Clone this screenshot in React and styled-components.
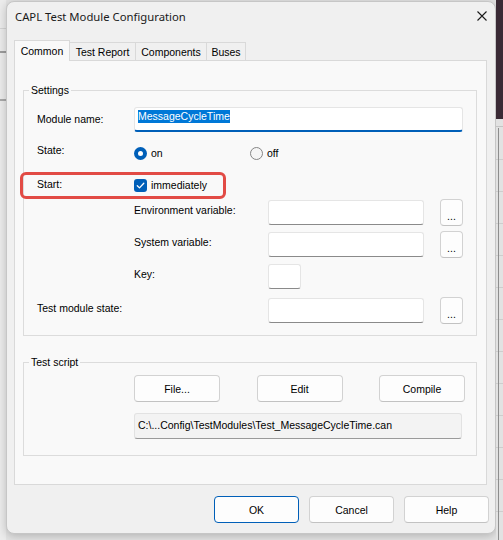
import React from 'react'
import styled, { createGlobalStyle } from 'styled-components'

const UI_FONT = `'Liberation Sans', Arial, sans-serif`

const GlobalStyle = createGlobalStyle`
  html, body {
    margin: 0;
    padding: 0;
  }
  body {
    background: #e4e4e4;
  }
  * {
    box-sizing: border-box;
  }
`

const Page = styled.div`
  display: flex;
  width: 503px;
  height: 540px;
  overflow: hidden;
  background: #e4e4e4;
  font-family: ${UI_FONT};
  font-size: 10.5px;
  color: #000;
`

const LeftBackdrop = styled.div`
  flex: 0 0 6px;
  background:
    linear-gradient(#d4d4d4, #d4d4d4) 0 28px / 100% 1px no-repeat,
    linear-gradient(#9c9c9c, #9c9c9c) 0 51px / 100% 2px no-repeat,
    linear-gradient(#a9a9a9, #a9a9a9) 0 99px / 100% 2px no-repeat,
    #ececec;
`

const RightBackdrop = styled.div`
  flex: 0 0 7px;
  background:
    linear-gradient(#3a2a35, #3a2a35) 0 0 / 100% 119px no-repeat,
    linear-gradient(#c4c4c4, #c4c4c4) 0 126px / 100% 1px no-repeat,
    linear-gradient(#8d8d8d, #8d8d8d) 2px 128px / 1px 100% no-repeat,
    repeating-linear-gradient(to bottom, #e2e2e2 0 31px, #cdcdcd 31px 32px) 0 128px / 100% 100% no-repeat,
    #e2e2e2;
`

const DialogColumn = styled.div`
  flex: 0 0 490px;
  padding-top: 1px;
`

const Dialog = styled.div`
  display: flex;
  flex-direction: column;
  height: 533px;
  background: #f0f0f0;
  border: 1px solid #c6c6c6;
  border-radius: 8px;
  box-shadow: 0 2px 10px rgba(0, 0, 0, 0.22);
`

const TitleBar = styled.div`
  display: flex;
  align-items: center;
  justify-content: space-between;
  height: 28px;
  padding: 0 8px 0 8px;
`

const Title = styled.span`
  font-family: 'Noto Sans', 'Open Sans', sans-serif;
  font-size: 11.3px;
  color: #1a1a1a;
`

const Body = styled.div`
  display: flex;
  flex-direction: column;
  padding: 10px 8px 0 7px;
`

const TabStrip = styled.div`
  display: flex;
  align-items: flex-end;
  height: 20px;
`

const Tab = styled.div`
  display: flex;
  align-items: center;
  justify-content: center;
  width: ${({ $w }) => $w}px;
  height: ${({ $active }) => ($active ? 21 : 18)}px;
  margin-bottom: ${({ $active }) => ($active ? -1 : 0)}px;
  margin-left: ${({ $first }) => ($first ? 0 : -1)}px;
  position: relative;
  z-index: ${({ $active }) => ($active ? 2 : 1)};
  background: ${({ $active }) => ($active ? '#f9f9f9' : '#f0f0f0')};
  border: 1px solid #d9d9d9;
  border-bottom: none;
  font-size: 10.5px;
`

const Panel = styled.div`
  height: 425px;
  background: #f9f9f9;
  border: 1px solid #d9d9d9;
  padding: 23px 9px 0 8px;
`

const GroupBox = styled.fieldset`
  margin: ${({ $mt }) => $mt || 0}px 0 0 0;
  padding: 0;
  border: 1px solid #dcdcdc;
  min-width: 0;
`

const Legend = styled.legend`
  margin-left: 5px;
  padding: 0 2px;
  line-height: 12px;
  font-size: 10.5px;
`

const GroupBody = styled.div`
  padding: ${({ $pad }) => $pad};
`

const Row = styled.div`
  display: grid;
  grid-template-columns: 97px 134px 156px 16px 23px;
  align-items: center;
  height: ${({ $h }) => $h}px;
  margin-top: ${({ $mt }) => $mt || 0}px;
  position: relative;
`

const Label = styled.span`
  grid-column: ${({ $col }) => $col || 1};
  padding-bottom: ${({ $lift }) => ($lift === undefined ? 4 : $lift)}px;
  line-height: 13px;
  white-space: nowrap;
`

const TextBox = styled.div`
  display: flex;
  align-items: flex-start;
  grid-column: ${({ $col }) => $col || 3};
  width: ${({ $w }) => ($w ? `${$w}px` : 'auto')};
  height: 25px;
  padding: ${({ $focused }) => ($focused ? '2px 3px' : '5px 3px')};
  background: #fff;
  border: 1px solid #e5e5e5;
  border-bottom: ${({ $focused }) => ($focused ? '2px solid #005fb8' : '1px solid #8a8a8a')};
  border-radius: 3px;
  line-height: 13px;
`

const Selected = styled.span`
  background: #0078d7;
  color: #fff;
  line-height: 13px;
`

const BrowseButton = styled.button`
  grid-column: 5;
  width: 23px;
  height: 27px;
  padding: 0 0 3px 0;
  display: flex;
  align-items: flex-end;
  justify-content: center;
  background: #fdfdfd;
  border: 1px solid #d2d2d2;
  border-bottom-color: #c2c2c2;
  border-radius: 4px;
  font-family: ${UI_FONT};
  font-size: 10.5px;
  color: #000;
`

const ChoiceGroup = styled.div`
  grid-column: 2 / -1;
  display: flex;
  align-items: center;
`

const Choice = styled.label`
  display: flex;
  align-items: center;
  gap: 4px;
  width: ${({ $w }) => ($w ? `${$w}px` : 'auto')};
  line-height: 13px;
`

const RadioDot = styled.span`
  flex: 0 0 13px;
  height: 13px;
  border-radius: 50%;
  display: flex;
  align-items: center;
  justify-content: center;
  background: ${({ $on }) => ($on ? '#005fb8' : '#f5f5f5')};
  border: ${({ $on }) => ($on ? 'none' : '1px solid #858585')};

  &::after {
    content: '';
    display: ${({ $on }) => ($on ? 'block' : 'none')};
    width: 5px;
    height: 5px;
    border-radius: 50%;
    background: #fff;
  }
`

const CheckBox = styled.span`
  flex: 0 0 13px;
  height: 13px;
  border-radius: 3px;
  background: #005fb8;
  display: flex;
  align-items: center;
  justify-content: center;
`

const Highlight = styled.div`
  position: absolute;
  left: -17px;
  top: -1px;
  width: 206px;
  height: 27px;
  border: 3px solid #e24b45;
  border-radius: 6px;
  pointer-events: none;
`

const ButtonRow = styled.div`
  display: flex;
  justify-content: ${({ $end }) => ($end ? 'flex-end' : 'space-between')};
  gap: ${({ $gap }) => $gap || 0}px;
`

const PushButton = styled.button`
  width: ${({ $w }) => $w}px;
  height: 27px;
  padding: 0;
  background: #fdfdfd;
  border: 1px solid ${({ $default }) => ($default ? '#005fb8' : '#d2d2d2')};
  border-bottom-color: ${({ $default }) => ($default ? '#005fb8' : '#c2c2c2')};
  border-radius: 4px;
  font-family: ${UI_FONT};
  font-size: 10.5px;
  color: #000;
`

const PathBox = styled.div`
  width: 328px;
  height: 26px;
  margin-top: 11px;
  padding: 5px 3px;
  background: #f3f3f3;
  border: 1px solid #e2e2e2;
  border-bottom-color: #9a9a9a;
  border-radius: 3px;
  line-height: 13px;
  white-space: nowrap;
`

const Footer = styled(ButtonRow)`
  margin: 11px -2px 0 0;
`

const CloseIcon = () => (
  <svg width="10" height="10" viewBox="0 0 10 10">
    <path d="M0.5 0.5 L9.5 9.5 M9.5 0.5 L0.5 9.5" stroke="#1a1a1a" strokeWidth="1.1" fill="none" />
  </svg>
)

const CheckMark = () => (
  <svg width="9" height="9" viewBox="0 0 9 9">
    <path d="M1.3 4.8 L3.5 6.9 L7.8 2.2" stroke="#fff" strokeWidth="1.3" fill="none" strokeLinecap="round" strokeLinejoin="round" />
  </svg>
)

const tabs = [
  { name: 'Common', w: 56 },
  { name: 'Test Report', w: 67 },
  { name: 'Components', w: 72 },
  { name: 'Buses', w: 40 },
]

const variableRows = [
  { label: 'Environment variable:', mt: 1 },
  { label: 'System variable:', mt: 5 },
]

const App = () => {
  return (
    <>
      <GlobalStyle />
      <Page>
        <LeftBackdrop />
        <DialogColumn>
          <Dialog>
            <TitleBar>
              <Title>CAPL Test Module Configuration</Title>
              <CloseIcon />
            </TitleBar>
            <Body>
              <TabStrip>
                {tabs.map((tab, i) => (
                  <Tab key={tab.name} $w={tab.w} $active={i === 0} $first={i === 0}>
                    {tab.name}
                  </Tab>
                ))}
              </TabStrip>
              <Panel>
                <GroupBox>
                  <Legend>Settings</Legend>
                  <GroupBody $pad="11px 13px 11px 13px">
                    <Row $h={25}>
                      <Label $lift={1}>Module name:</Label>
                      <TextBox $col="2 / -1" $focused>
                        <Selected>MessageCycleTime</Selected>
                      </TextBox>
                    </Row>
                    <Row $h={25} $mt={9}>
                      <Label $lift={7}>State:</Label>
                      <ChoiceGroup>
                        <Choice $w={116}>
                          <RadioDot $on />
                          on
                        </Choice>
                        <Choice>
                          <RadioDot />
                          off
                        </Choice>
                      </ChoiceGroup>
                    </Row>
                    <Row $h={25} $mt={7}>
                      <Highlight />
                      <Label $lift={3}>Start:</Label>
                      <ChoiceGroup>
                        <Choice>
                          <CheckBox>
                            <CheckMark />
                          </CheckBox>
                          immediately
                        </Choice>
                      </ChoiceGroup>
                    </Row>
                    {variableRows.map((row) => (
                      <Row key={row.label} $h={27} $mt={row.mt}>
                        <Label $col={2}>{row.label}</Label>
                        <TextBox />
                        <BrowseButton>...</BrowseButton>
                      </Row>
                    ))}
                    <Row $h={27} $mt={5}>
                      <Label $col={2}>Key:</Label>
                      <TextBox $w={33} />
                    </Row>
                    <Row $h={27} $mt={7}>
                      <Label>Test module state:</Label>
                      <TextBox />
                      <BrowseButton>...</BrowseButton>
                    </Row>
                  </GroupBody>
                </GroupBox>
                <GroupBox $mt={20}>
                  <Legend>Test script</Legend>
                  <GroupBody $pad="7px 11px 16px 110px">
                    <ButtonRow>
                      <PushButton $w={86}>File...</PushButton>
                      <PushButton $w={86}>Edit</PushButton>
                      <PushButton $w={86}>Compile</PushButton>
                    </ButtonRow>
                    <PathBox>C:\...Config\TestModules\Test_MessageCycleTime.can</PathBox>
                  </GroupBody>
                </GroupBox>
              </Panel>
              <Footer $end $gap={10}>
                <PushButton $w={85} $default>OK</PushButton>
                <PushButton $w={85}>Cancel</PushButton>
                <PushButton $w={85}>Help</PushButton>
              </Footer>
            </Body>
          </Dialog>
        </DialogColumn>
        <RightBackdrop />
      </Page>
    </>
  )
}

export default App
